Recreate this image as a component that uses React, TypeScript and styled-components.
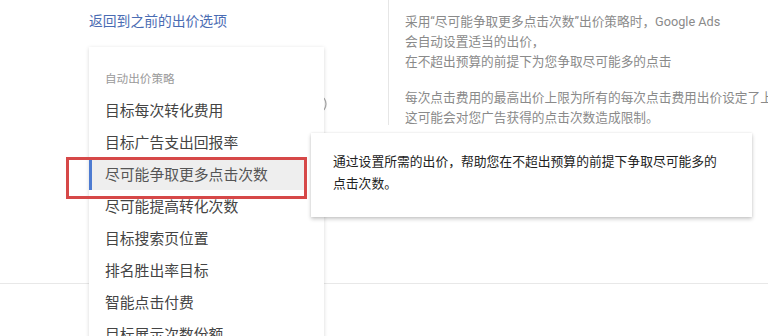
import React from 'react';
import styled, { createGlobalStyle } from 'styled-components';

const GlobalStyle = createGlobalStyle`
  html, body {
    margin: 0;
    padding: 0;
    background: #fff;
  }
  body {
    font-family: Roboto, "Noto Sans CJK SC", sans-serif;
  }
`

const Page = styled.div`
  position: relative;
  width: 768px;
  height: 336px;
  overflow: hidden;
  background: #fff;
`

const Section = styled.div`
  display: flex;
  height: 283px;
  border-bottom: 1px solid #e8e8e8;
`

const LeftCol = styled.div`
  width: 299px;
  padding-left: 89px;
  padding-top: 10px;
  display: flex;
  flex-direction: column;
`

const BackLink = styled.a`
  font-family: "Noto Sans CJK SC", sans-serif;
  font-size: 13.8px;
  line-height: 20px;
  color: #4a6cb3;
  text-decoration: none;
  cursor: pointer;
`

const FieldRow = styled.div`
  margin-top: 67px;
  width: 240px;
  display: flex;
  justify-content: flex-end;
`

const RightCol = styled.div`
  flex: 1;
  align-self: flex-start;
  border-left: 1px solid #e6e6e6;
  padding: 12px 0 0 16px;
  height: 113px;
  overflow: hidden;
`

const Para = styled.p`
  margin: 0 0 16px 0;
  font-family: Roboto, "Noto Sans CJK SC", sans-serif;
  font-size: 12.7px;
  line-height: 20px;
  color: #8a8a8a;
  white-space: nowrap;
`

const Menu = styled.div`
  position: absolute;
  left: 89px;
  top: 47px;
  width: 235px;
  height: 300px;
  background: #fff;
  box-shadow: 0 1px 4px rgba(0, 0, 0, 0.16);
  padding-top: 15px;
  box-sizing: border-box;
`

const MenuHeader = styled.div`
  height: 32px;
  line-height: 32px;
  padding-left: 16px;
  font-family: "Noto Sans CJK SC", sans-serif;
  font-size: 11.6px;
  color: #9a9a9a;
`

const MenuItem = styled.div<{ $active?: boolean }>`
  height: 32px;
  line-height: 32px;
  padding-left: ${p => (p.$active ? '13px' : '16px')};
  margin-right: ${p => (p.$active ? '19px' : '0')};
  border-left: ${p => (p.$active ? '3px solid #4d7bd1' : 'none')};
  background: ${p => (p.$active ? '#eeeeee' : 'transparent')};
  font-family: "Noto Sans CJK SC", sans-serif;
  font-size: 14.8px;
  color: ${p => (p.$active ? '#555' : '#444')};
  white-space: nowrap;
`

const Tooltip = styled.div`
  position: absolute;
  left: 311px;
  top: 133px;
  width: 441px;
  height: 84px;
  box-sizing: border-box;
  padding: 17px 22px 0 22px;
  background: #fff;
  box-shadow: 0 2px 4px rgba(0, 0, 0, 0.22), 0 0 2px rgba(0, 0, 0, 0.08);
  font-family: "Noto Sans CJK SC", sans-serif;
  font-size: 12.8px;
  line-height: 22px;
  color: #222;
`

const Annotation = styled.div`
  position: absolute;
  left: 66px;
  top: 157px;
  width: 241px;
  height: 42px;
  box-sizing: border-box;
  border: 3px solid #d64848;
  pointer-events: none;
`

const Chevron = () => (
  <svg width="6" height="14" viewBox="0 0 6 14">
    <path d="M1 1 Q5 7 1 13" fill="none" stroke="#aaa" strokeWidth="1.3" />
  </svg>
)

const items = [
  '目标每次转化费用',
  '目标广告支出回报率',
  '尽可能争取更多点击次数',
  '尽可能提高转化次数',
  '目标搜索页位置',
  '排名胜出率目标',
  '智能点击付费',
  '目标展示次数份额',
];

const App = () => {
  return (
    <Page>
      <GlobalStyle />
      <Section>
        <LeftCol>
          <BackLink>返回到之前的出价选项</BackLink>
          <FieldRow>
            <Chevron />
          </FieldRow>
        </LeftCol>
        <RightCol>
          <Para>
            采用“尽可能争取更多点击次数”出价策略时，Google Ads<br />
            会自动设置适当的出价，<br />
            在不超出预算的前提下为您争取尽可能多的点击
          </Para>
          <Para>
            每次点击费用的最高出价上限为所有的每次点击费用出价设定了上限，<br />
            这可能会对您广告获得的点击次数造成限制。
          </Para>
        </RightCol>
      </Section>

      <Menu>
        <MenuHeader>自动出价策略</MenuHeader>
        {items.map((s, i) => (
          <MenuItem key={s} $active={i === 2}>{s}</MenuItem>
        ))}
      </Menu>

      <Annotation />

      <Tooltip>
        通过设置所需的出价，帮助您在不超出预算的前提下争取尽可能多的<br />
        点击次数。
      </Tooltip>
    </Page>
  );
}

export default App;
